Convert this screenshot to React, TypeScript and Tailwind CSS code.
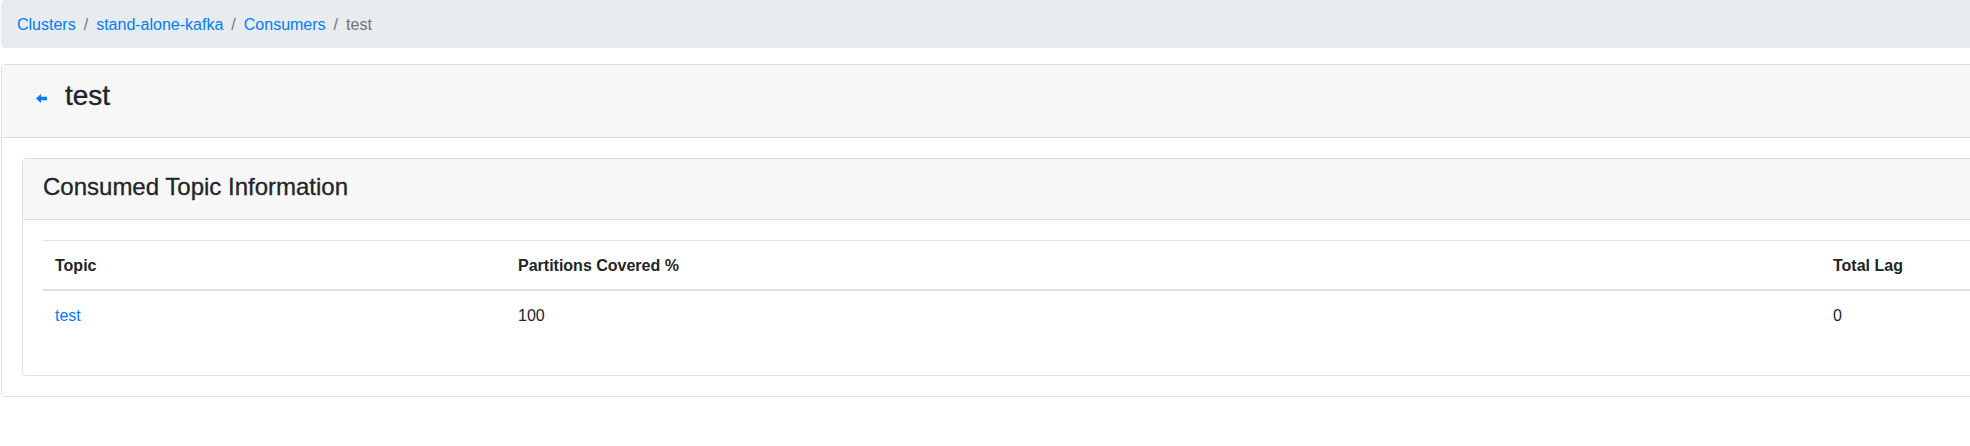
import React from 'react';

const FONT = "font-['Segoe_UI','Liberation_Sans',Arial,sans-serif]";

const rows = [{ topic: 'test', covered: '100', lag: '0' }];

const Breadcrumb = () => (
    <nav className="ml-px mb-4 h-12 rounded bg-[#e9ecef] px-4 pt-[13px] pb-[11px]">
        <ol className="flex items-center text-base leading-6">
            <li><a className="text-[#007bff]">Clusters</a></li>
            <li className="px-2 text-[#6c757d]">/</li>
            <li><a className="text-[#007bff]">stand-alone-kafka</a></li>
            <li className="px-2 text-[#6c757d]">/</li>
            <li><a className="text-[#007bff]">Consumers</a></li>
            <li className="px-2 text-[#6c757d]">/</li>
            <li className="text-[#6c757d]">test</li>
        </ol>
    </nav>
);

const BackArrow = () => (
    <svg width="11" height="9" viewBox="0 0 11 9" className="text-[#007bff]">
        <path d="M0 4.5 L5 0 L5 2.8 L11 2.8 L11 6.2 L5 6.2 L5 9 Z" fill="currentColor" />
    </svg>
);

const th = 'border-t border-b-2 border-t-[#dee2e6] border-b-[#dee2e6] px-3 pt-[13px] pb-[11px] text-left font-bold';
const td = 'px-3 pt-[13px] pb-[11px]';

export default function App() {
    return (
        <div className={`w-full overflow-hidden bg-white text-[#212529] ${FONT}`}>
            <div className="w-[2200px]">
                <Breadcrumb />

                <div className="ml-px rounded border border-[#dfdfdf]">
                    <div className="flex h-[73px] items-start border-b border-[#dfdfdf] bg-[#f7f7f7] pl-[34px] pt-[14px]">
                        <button className="mr-[18px] mt-[15px] flex">
                            <BackArrow />
                        </button>
                        <h3 className="text-[28px] font-medium leading-[1.2] [-webkit-text-stroke:0.4px]">test</h3>
                    </div>

                    <div className="p-5">
                        <div className="rounded border border-[#dfdfdf]">
                            <div className="h-[61px] border-b border-[#dfdfdf] bg-[#f7f7f7] px-5 pt-[14px]">
                                <h4 className="text-2xl font-medium leading-[1.2] [-webkit-text-stroke:0.3px]">Consumed Topic Information</h4>
                            </div>
                            <div className="p-5">
                                <table className="mb-4 w-full border-collapse text-base leading-6">
                                    <thead>
                                        <tr>
                                            <th className={`w-[463px] ${th}`}>Topic</th>
                                            <th className={`w-[1315px] ${th}`}>Partitions Covered %</th>
                                            <th className={th}>Total Lag</th>
                                        </tr>
                                    </thead>
                                    <tbody>
                                        {rows.map((r) => (
                                            <tr key={r.topic}>
                                                <td className={td}><a className="text-[#007bff]">{r.topic}</a></td>
                                                <td className={td}>{r.covered}</td>
                                                <td className={td}>{r.lag}</td>
                                            </tr>
                                        ))}
                                    </tbody>
                                </table>
                            </div>
                        </div>
                    </div>
                </div>
            </div>
        </div>
    );
}
